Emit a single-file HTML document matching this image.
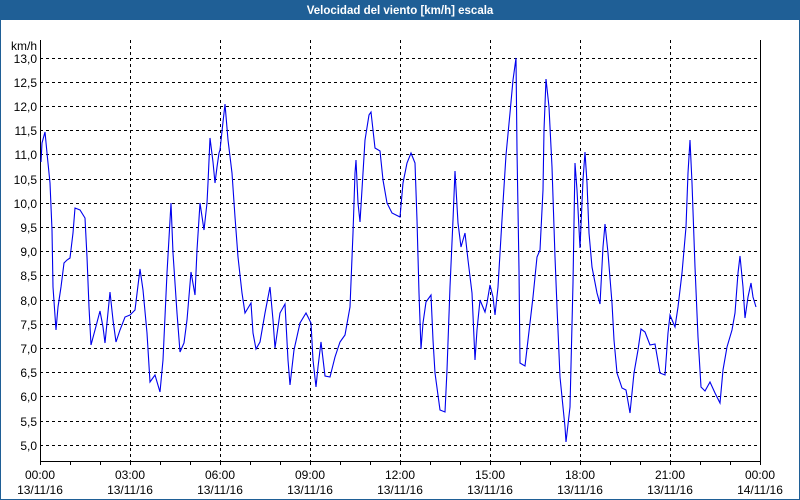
<!DOCTYPE html>
<html><head><meta charset="utf-8"><style>
html,body{margin:0;padding:0;background:#fff}
#w{position:relative;width:800px;height:500px;overflow:hidden;font-family:"Liberation Sans",sans-serif;}
svg text{font-family:"Liberation Sans",sans-serif;font-size:12px;fill:#000}
</style></head><body><div id="w">
<svg width="800" height="500" viewBox="0 0 800 500" xmlns="http://www.w3.org/2000/svg">
<rect x="0" y="0" width="800" height="500" fill="#fff"/>
<rect x="0" y="0" width="800" height="20" fill="#1f5f96"/>
<rect x="0.5" y="0.5" width="799" height="499" fill="none" stroke="#1f5f96"/>
<text x="400" y="14" text-anchor="middle" style="font-weight:bold;fill:#fff;font-size:11.5px">Velocidad del viento [km/h] escala</text>
<g stroke="#000" stroke-width="1" stroke-dasharray="3,3" shape-rendering="crispEdges">
<line x1="40" y1="58.5" x2="760" y2="58.5"/><line x1="40" y1="82.5" x2="760" y2="82.5"/><line x1="40" y1="106.5" x2="760" y2="106.5"/><line x1="40" y1="130.5" x2="760" y2="130.5"/><line x1="40" y1="154.5" x2="760" y2="154.5"/><line x1="40" y1="179.5" x2="760" y2="179.5"/><line x1="40" y1="203.5" x2="760" y2="203.5"/><line x1="40" y1="227.5" x2="760" y2="227.5"/><line x1="40" y1="251.5" x2="760" y2="251.5"/><line x1="40" y1="275.5" x2="760" y2="275.5"/><line x1="40" y1="300.5" x2="760" y2="300.5"/><line x1="40" y1="324.5" x2="760" y2="324.5"/><line x1="40" y1="348.5" x2="760" y2="348.5"/><line x1="40" y1="372.5" x2="760" y2="372.5"/><line x1="40" y1="396.5" x2="760" y2="396.5"/><line x1="40" y1="421.5" x2="760" y2="421.5"/><line x1="40" y1="445.5" x2="760" y2="445.5"/>
<line x1="130.5" y1="40" x2="130.5" y2="461"/><line x1="220.5" y1="40" x2="220.5" y2="461"/><line x1="310.5" y1="40" x2="310.5" y2="461"/><line x1="400.5" y1="40" x2="400.5" y2="461"/><line x1="490.5" y1="40" x2="490.5" y2="461"/><line x1="580.5" y1="40" x2="580.5" y2="461"/><line x1="670.5" y1="40" x2="670.5" y2="461"/>
</g>
<g stroke="#000" stroke-width="1" shape-rendering="crispEdges">
<line x1="40.5" y1="40" x2="40.5" y2="465"/><line x1="760.5" y1="40" x2="760.5" y2="465"/><line x1="40" y1="461.5" x2="761" y2="461.5"/>
<path d="M70.5 461v4M100.5 461v4M130.5 461v4M160.5 461v4M190.5 461v4M220.5 461v4M250.5 461v4M280.5 461v4M310.5 461v4M340.5 461v4M370.5 461v4M400.5 461v4M430.5 461v4M460.5 461v4M490.5 461v4M520.5 461v4M550.5 461v4M580.5 461v4M610.5 461v4M640.5 461v4M670.5 461v4M700.5 461v4M730.5 461v4"/>
</g>
<g text-anchor="end">
<text x="37" y="50">km/h</text>
<text x="37" y="63">13,0</text><text x="37" y="87">12,5</text><text x="37" y="111">12,0</text><text x="37" y="135">11,5</text><text x="37" y="159">11,0</text><text x="37" y="184">10,5</text><text x="37" y="208">10,0</text><text x="37" y="232">9,5</text><text x="37" y="256">9,0</text><text x="37" y="280">8,5</text><text x="37" y="305">8,0</text><text x="37" y="329">7,5</text><text x="37" y="353">7,0</text><text x="37" y="377">6,5</text><text x="37" y="401">6,0</text><text x="37" y="426">5,5</text><text x="37" y="450">5,0</text>
</g>
<g text-anchor="middle">
<text x="40" y="479">00:00</text><text x="40" y="494">13/11/16</text>
<text x="130" y="479">03:00</text><text x="130" y="494">13/11/16</text>
<text x="220" y="479">06:00</text><text x="220" y="494">13/11/16</text>
<text x="310" y="479">09:00</text><text x="310" y="494">13/11/16</text>
<text x="400" y="479">12:00</text><text x="400" y="494">13/11/16</text>
<text x="490" y="479">15:00</text><text x="490" y="494">13/11/16</text>
<text x="580" y="479">18:00</text><text x="580" y="494">13/11/16</text>
<text x="670" y="479">21:00</text><text x="670" y="494">13/11/16</text>
<text x="760" y="479">00:00</text><text x="760" y="494">14/11/16</text>
</g>
<polyline fill="none" stroke="#0000ee" stroke-width="1.1" points="41,162 42,143 45,132 47,153 50,183 52,230 53,287 56,330 58,307 61,287 64,263 67,260 70,258 73,233 75,208 80,210 85,218 87,257 89,307 91,345 95,330 100,311 103,327 105,343 110,292 113,320 116,342 120,330 125,317 130,315 135,310 140,269 143,290 147,333 150,382 155,375 160,392 163,360 167,273 171,203 173,253 177,313 180,352 184,343 187,320 191,272 195,295 197,250 200,203 204,230 207,203 208,183 210,138 213,162 215,183 217,167 219,153 220,150 223,122 225,104 228,140 232,173 235,217 238,257 242,293 245,313 251,303 253,333 256,349 260,342 265,313 270,287 273,320 275,348 280,313 285,304 288,360 290,385 294,350 300,323 306,313 311,323 313,360 316,387 318,367 321,342 325,376 330,377 335,357 340,342 345,335 350,307 353,233 355,173 356,160 358,203 360,222 363,173 365,140 369,115 371,112 375,148 380,151 383,180 387,203 392,213 400,217 403,183 407,163 411,153 415,163 417,220 419,293 421,349 423,323 426,302 431,295 433,340 435,373 440,410 445,412 447,370 450,287 453,220 455,171 458,223 461,247 465,233 468,260 472,293 475,360 477,330 480,300 485,312 487,303 490,285 493,297 495,315 498,287 500,253 503,203 506,155 510,113 513,80 516,58 517,150 519,270 520,363 525,366 528,340 533,297 537,257 540,250 543,190 544,130 546,79 549,107 552,167 555,257 557,307 560,377 565,427 566,442 570,407 573,283 575,163 577,190 580,248 583,180 585,152 587,183 589,233 592,267 597,293 600,304 603,247 605,224 608,253 612,303 614,340 617,373 622,388 626,390 630,413 634,373 638,350 641,329 645,332 650,345 655,344 660,373 665,375 668,333 670,315 675,327 678,307 682,273 686,227 688,173 690,140 692,183 695,267 698,337 701,387 705,391 710,382 715,393 720,403 723,370 727,347 732,330 735,313 738,273 740,256 743,287 745,318 748,297 751,283 753,297 756,307"/>
</svg>
</div></body></html>
